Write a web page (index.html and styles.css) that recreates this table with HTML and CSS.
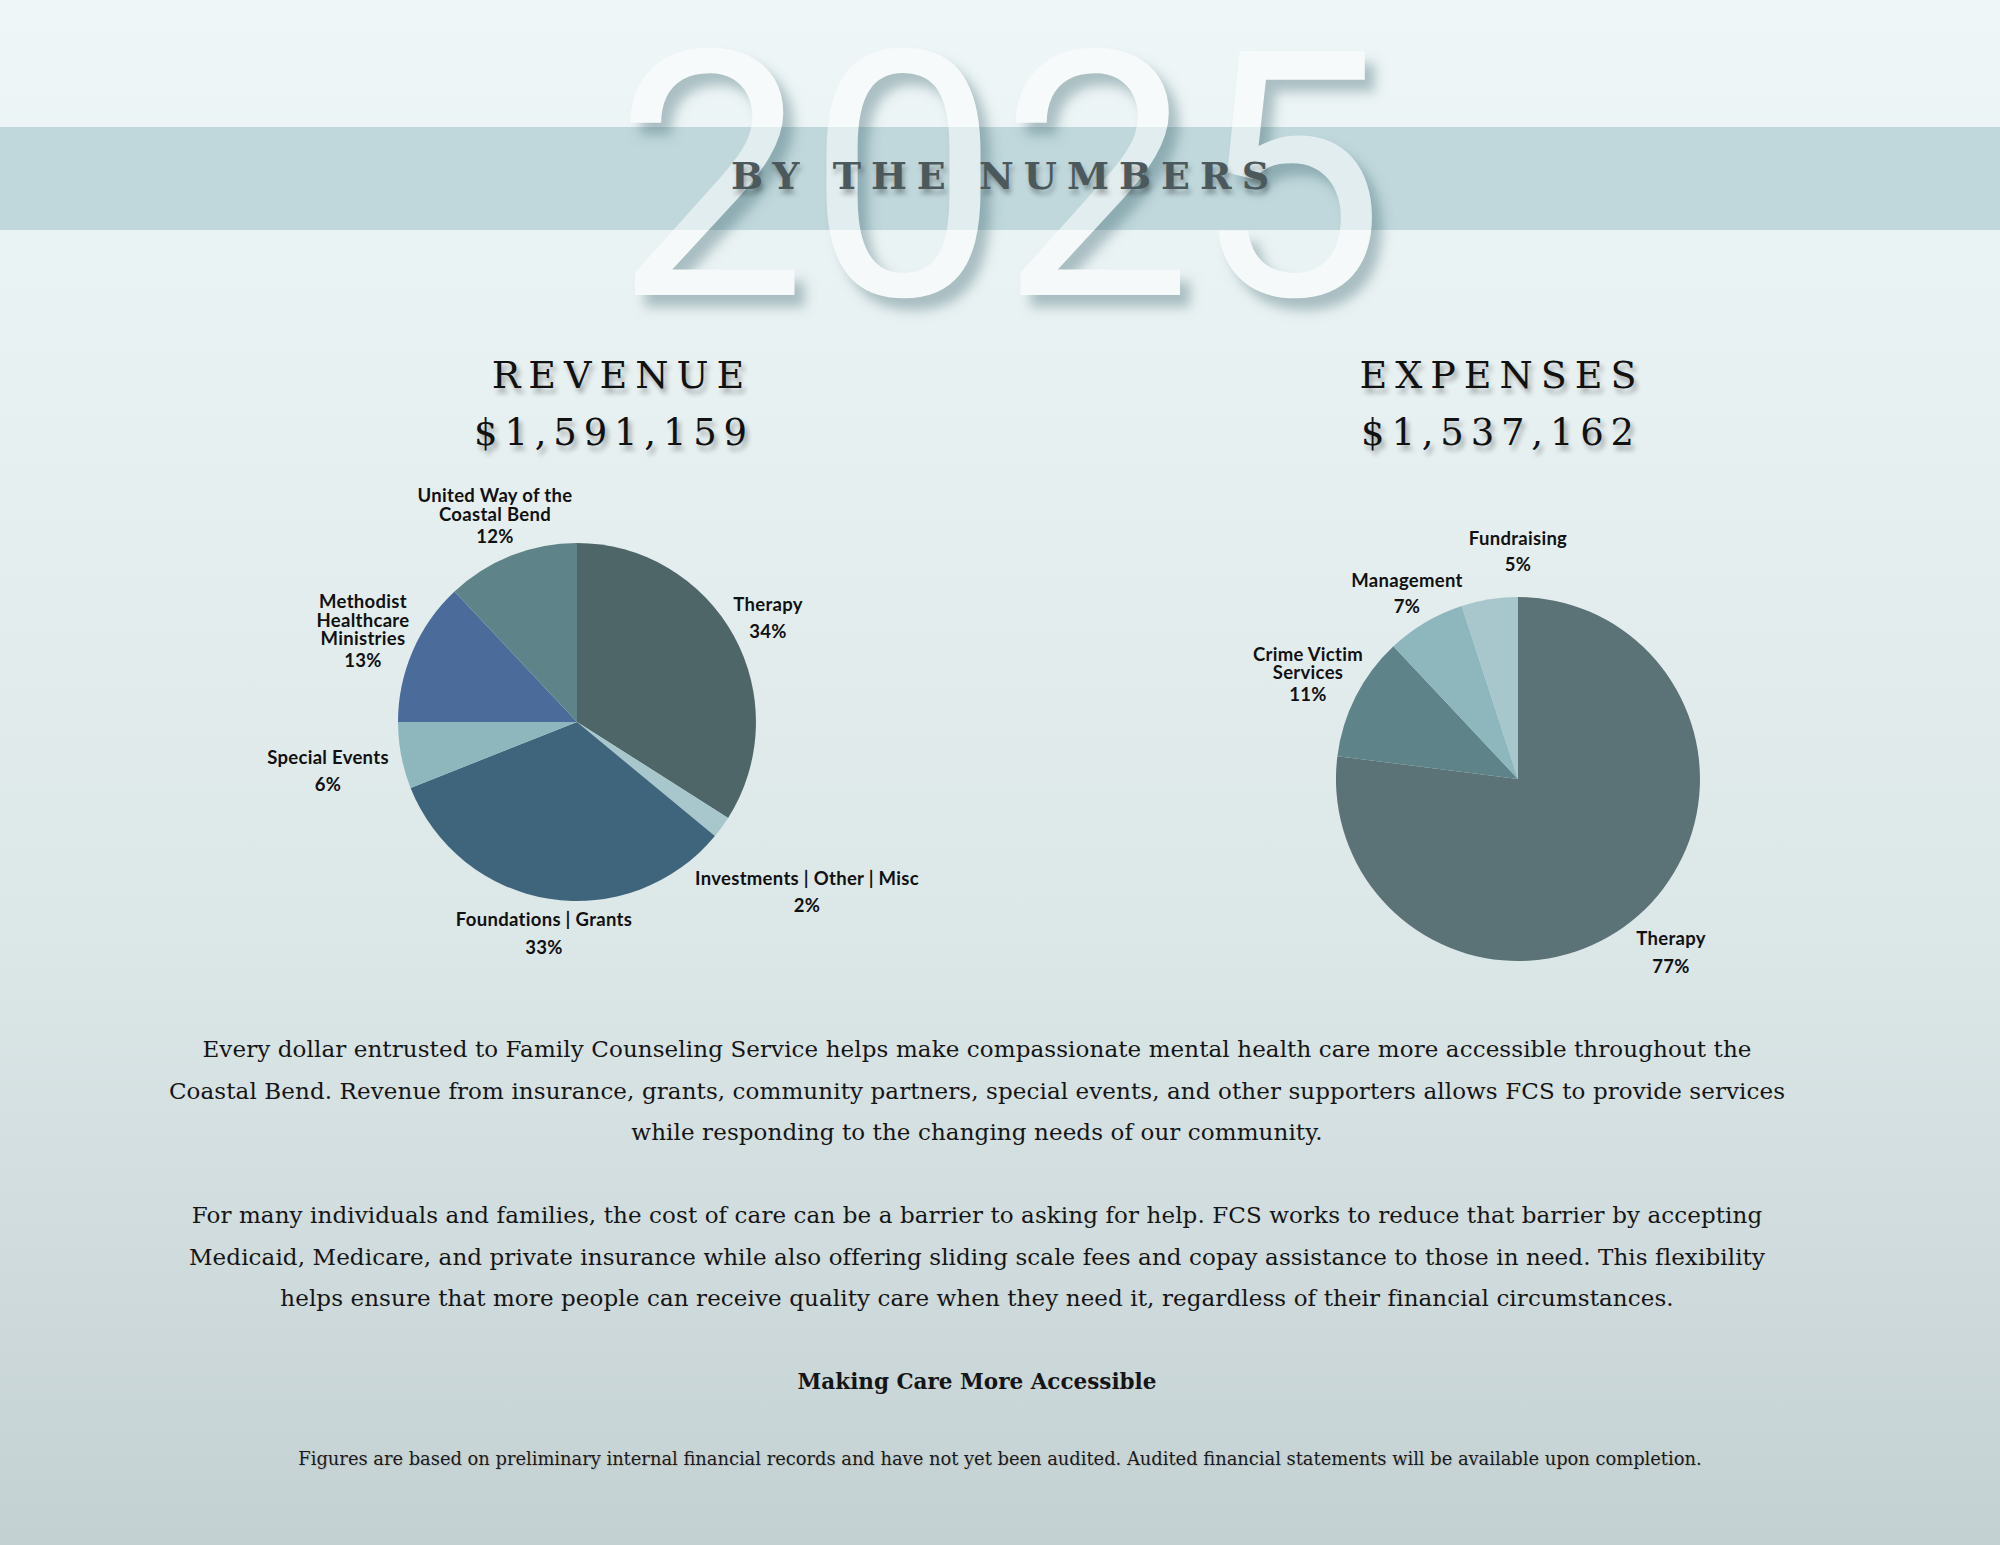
FILE: index.html
```html
<!DOCTYPE html>
<html lang="en">
<head>
<meta charset="utf-8">
<title>2025 By the Numbers</title>
<link rel="stylesheet" href="styles.css">
</head>
<body>
<div class="page">
  <header class="hero">
    <div class="year" aria-hidden="true">2025</div>
    <div class="band">
      <h1 class="title">BY THE NUMBERS</h1>
    </div>
  </header>

  <section class="charts">
    <div class="col">
      <h2 class="heading">REVENUE</h2>
      <div class="amount amount-left">$1,591,159</div>
      <svg class="chart" width="640" height="520" viewBox="0 0 640 520">
        <path class="s-therapy" d="M276,252 L276,73 A179,179 0 0 1 427.1,347.9 Z"/>
        <path class="s-light" d="M276,252 L427.1,347.9 A179,179 0 0 1 413.9,366.1 Z"/>
        <path class="s-found" d="M276,252 L413.9,366.1 A179,179 0 0 1 109.6,317.9 Z"/>
        <path class="s-mid" d="M276,252 L109.6,317.9 A179,179 0 0 1 97,252 Z"/>
        <path class="s-blue" d="M276,252 L97,252 A179,179 0 0 1 153.5,121.5 Z"/>
        <path class="s-teal" d="M276,252 L153.5,121.5 A179,179 0 0 1 276,73 Z"/>

        <text class="lbl" x="194" y="32">United Way of the</text>
        <text class="lbl" x="194" y="51">Coastal Bend</text>
        <text class="lbl" x="194" y="73">12%</text>

        <text class="lbl" x="62" y="138">Methodist</text>
        <text class="lbl" x="62" y="157">Healthcare</text>
        <text class="lbl" x="62" y="175">Ministries</text>
        <text class="lbl" x="62" y="197">13%</text>

        <text class="lbl" x="467" y="141">Therapy</text>
        <text class="lbl" x="467" y="168">34%</text>

        <text class="lbl" x="27" y="294">Special Events</text>
        <text class="lbl" x="27" y="321">6%</text>

        <text class="lbl" x="243" y="456">Foundations | Grants</text>
        <text class="lbl" x="243" y="484">33%</text>

        <text class="lbl" x="506" y="415">Investments | Other | Misc</text>
        <text class="lbl" x="506" y="442">2%</text>
      </svg>
    </div>

    <div class="col">
      <h2 class="heading">EXPENSES</h2>
      <div class="amount">$1,537,162</div>
      <svg class="chart" width="640" height="520" viewBox="0 0 640 520">
        <path class="e-therapy" d="M337,309 L337,127 A182,182 0 1 1 156.4,286.2 Z"/>
        <path class="s-teal" d="M337,309 L156.4,286.2 A182,182 0 0 1 212.4,176.3 Z"/>
        <path class="s-mid" d="M337,309 L212.4,176.3 A182,182 0 0 1 280.8,135.9 Z"/>
        <path class="s-light" d="M337,309 L280.8,135.9 A182,182 0 0 1 337,127 Z"/>

        <text class="lbl" x="337" y="75">Fundraising</text>
        <text class="lbl" x="337" y="101">5%</text>

        <text class="lbl" x="226" y="117">Management</text>
        <text class="lbl" x="226" y="143">7%</text>

        <text class="lbl" x="127" y="191">Crime Victim</text>
        <text class="lbl" x="127" y="209">Services</text>
        <text class="lbl" x="127" y="231">11%</text>

        <text class="lbl" x="490" y="475">Therapy</text>
        <text class="lbl" x="490" y="503">77%</text>
      </svg>
    </div>
  </section>

  <section class="copy">
    <p>Every dollar entrusted to Family Counseling Service helps make compassionate mental health care more accessible throughout the<br>Coastal Bend. Revenue from insurance, grants, community partners, special events, and other supporters allows FCS to provide services<br>while responding to the changing needs of our community.</p>
    <p>For many individuals and families, the cost of care can be a barrier to asking for help. FCS works to reduce that barrier by accepting<br>Medicaid, Medicare, and private insurance while also offering sliding scale fees and copay assistance to those in need. This flexibility<br>helps ensure that more people can receive quality care when they need it, regardless of their financial circumstances.</p>
    <p class="strong">Making Care More Accessible</p>
  </section>

  <p class="note">Figures are based on preliminary internal financial records and have not yet been audited. Audited financial statements will be available upon completion.</p>
</div>
</body>
</html>
```

FILE: styles.css
```css
html, body {
  margin: 0;
  padding: 0;
}

body {
  width: 2000px;
  min-height: 1545px;
  background: linear-gradient(to bottom, #eef6f7 0%, #e8f1f2 25%, #dce7e8 60%, #c4d1d2 100%);
  font-family: "DejaVu Serif", "Liberation Serif", serif;
  color: #151515;
}

.page {
  width: 2000px;
  min-height: 1545px;
}

/* ---------- header ---------- */
.hero {
  position: relative;
  box-sizing: border-box;
  height: 346px;
  padding-top: 127px;
}

.band {
  height: 103px;
  background: #c0d8dc;
  display: flex;
  align-items: center;
  justify-content: center;
}

.year {
  position: absolute;
  top: 7px;
  left: 0;
  right: 0;
  z-index: 1;
  text-align: center;
  font-family: Roboto, "Liberation Sans", sans-serif;
  font-weight: 400;
  font-size: 343px;
  line-height: 343px;
  color: #ffffff;
  opacity: 0.55;
  text-shadow: 10px 12px 12px rgba(40, 85, 95, 0.6);
}

.title {
  position: relative;
  z-index: 2;
  margin: 0;
  padding-left: 10px;
  font-family: "DejaVu Serif", serif;
  font-weight: 700;
  font-size: 38px;
  line-height: 44px;
  letter-spacing: 10px;
  color: #4b595d;
  text-shadow: 2px 5px 5px rgba(0, 0, 0, 0.3);
  transform: translateY(-3px);
}

/* ---------- charts ---------- */
.charts {
  display: flex;
  gap: 240px;
  padding-left: 301px;
}

.col {
  width: 640px;
  display: flex;
  flex-direction: column;
  align-items: center;
}

.heading,
.amount {
  margin: 0;
  font-family: "DejaVu Serif", serif;
  font-weight: 400;
  color: #111;
  text-shadow: 3px 5px 5px rgba(0, 0, 0, 0.32);
}

.heading {
  font-size: 38px;
  line-height: 58px;
  letter-spacing: 8px;
  padding-left: 2px;
}

.amount {
  font-size: 37px;
  line-height: 58px;
  letter-spacing: 6.8px;
}

.amount-left {
  padding-right: 14px;
}

.chart {
  display: block;
  margin-top: 8px;
  overflow: visible;
}

.lbl {
  font-family: Lato, "Noto Sans", sans-serif;
  font-weight: 700;
  font-size: 18.5px;
  letter-spacing: 0.3px;
  fill: #111;
  text-anchor: middle;
}

.s-therapy { fill: #4f6669; }
.e-therapy { fill: #5b7276; }
.s-light   { fill: #a7c7cc; }
.s-found   { fill: #3f657c; }
.s-mid     { fill: #8db6bd; }
.s-blue    { fill: #4b6b9a; }
.s-teal    { fill: #5e8489; }

/* ---------- copy ---------- */
.copy {
  width: 1700px;
  margin-left: 127px;
  padding-top: 39px;
  text-align: center;
}

.copy p {
  margin: 0 0 41.5px;
  font-size: 23px;
  letter-spacing: 0.1px;
  line-height: 41.5px;
  color: #151515;
}

.copy p.strong {
  font-weight: 700;
  font-size: 21.5px;
  letter-spacing: 0;
  margin-bottom: 41.5px;
}

.note {
  margin: 0;
  text-align: center;
  font-size: 17.85px;
  line-height: 30px;
  color: #1a1a1a;
  text-shadow: 1px 1px 1px rgba(0, 0, 0, 0.12);
}
```
